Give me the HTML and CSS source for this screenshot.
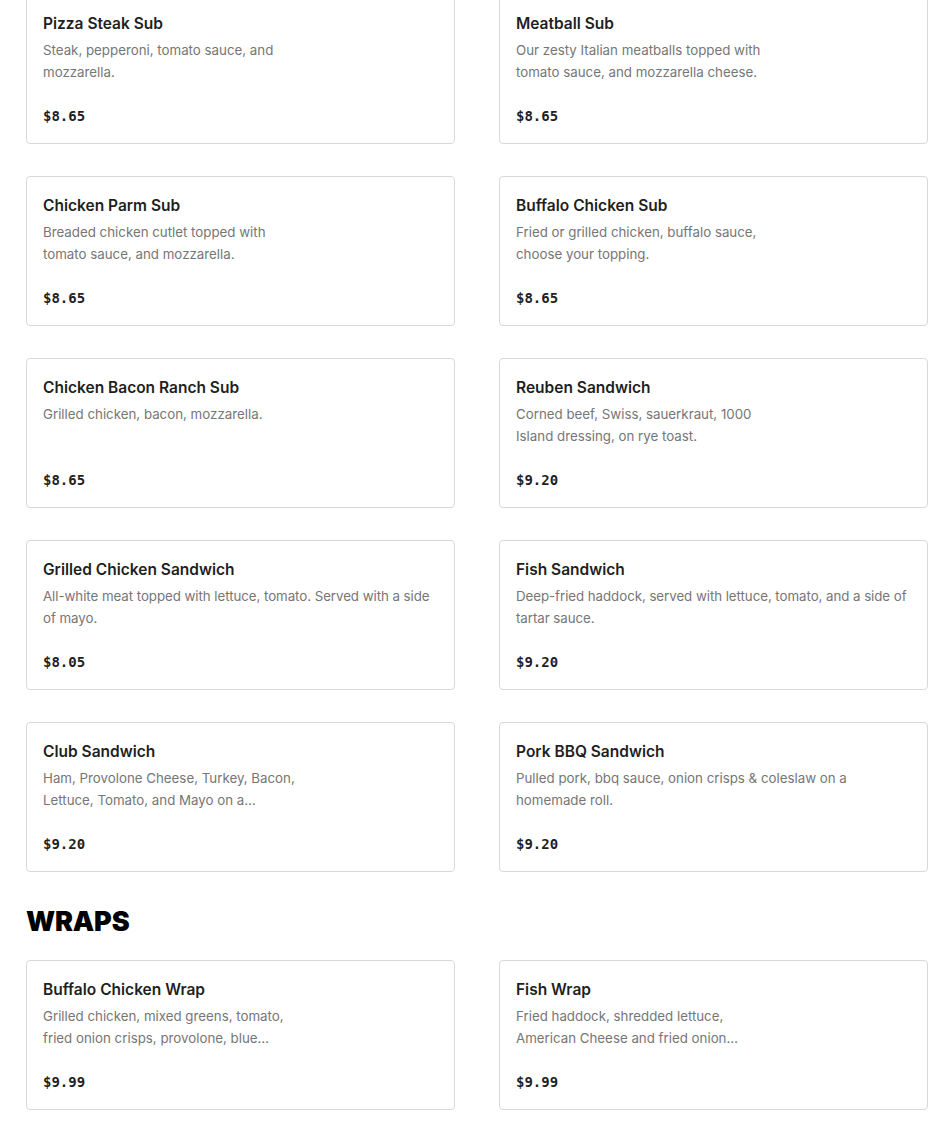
FILE: index.html
```html
<!DOCTYPE html>
<html lang="en">
<head>
<meta charset="utf-8">
<title>Menu</title>
<link rel="stylesheet" href="styles.css">
</head>
<body>
<main class="menu">
  <section class="section section-first">
    <div class="grid">
      <div class="card"><div class="card-body"><h3 class="title">Pizza Steak Sub</h3><p class="desc narrow">Steak, pepperoni, tomato sauce, and mozzarella.</p></div><div class="price">$8.65</div></div>
      <div class="card"><div class="card-body"><h3 class="title">Meatball Sub</h3><p class="desc narrow">Our zesty Italian meatballs topped with tomato sauce, and mozzarella cheese.</p></div><div class="price">$8.65</div></div>
      <div class="card"><div class="card-body"><h3 class="title">Chicken Parm Sub</h3><p class="desc narrow">Breaded chicken cutlet topped with tomato sauce, and mozzarella.</p></div><div class="price">$8.65</div></div>
      <div class="card"><div class="card-body"><h3 class="title">Buffalo Chicken Sub</h3><p class="desc narrow">Fried or grilled chicken, buffalo sauce, choose your topping.</p></div><div class="price">$8.65</div></div>
      <div class="card"><div class="card-body"><h3 class="title">Chicken Bacon Ranch Sub</h3><p class="desc narrow">Grilled chicken, bacon, mozzarella.</p></div><div class="price">$8.65</div></div>
      <div class="card"><div class="card-body"><h3 class="title">Reuben Sandwich</h3><p class="desc narrow">Corned beef, Swiss, sauerkraut, 1000 Island dressing, on rye toast.</p></div><div class="price">$9.20</div></div>
      <div class="card"><div class="card-body"><h3 class="title">Grilled Chicken Sandwich</h3><p class="desc full">All-white meat topped with lettuce, tomato. Served with a side of mayo.</p></div><div class="price">$8.05</div></div>
      <div class="card"><div class="card-body"><h3 class="title">Fish Sandwich</h3><p class="desc full">Deep-fried haddock, served with lettuce, tomato, and a side of tartar sauce.</p></div><div class="price">$9.20</div></div>
      <div class="card"><div class="card-body"><h3 class="title">Club Sandwich</h3><p class="desc narrow">Ham, Provolone Cheese, Turkey, Bacon, Lettuce, Tomato, and Mayo on a…</p></div><div class="price">$9.20</div></div>
      <div class="card"><div class="card-body"><h3 class="title">Pork BBQ Sandwich</h3><p class="desc medium">Pulled pork, bbq sauce, onion crisps &amp; coleslaw on a homemade roll.</p></div><div class="price">$9.20</div></div>
    </div>
  </section>
  <section class="section">
    <h2 class="section-title">WRAPS</h2>
    <div class="grid">
      <div class="card"><div class="card-body"><h3 class="title">Buffalo Chicken Wrap</h3><p class="desc narrow">Grilled chicken, mixed greens, tomato, fried onion crisps, provolone, blue…</p></div><div class="price">$9.99</div></div>
      <div class="card"><div class="card-body"><h3 class="title">Fish Wrap</h3><p class="desc narrow">Fried haddock, shredded lettuce, American Cheese and fried onion…</p></div><div class="price">$9.99</div></div>
    </div>
  </section>
</main>
</body>
</html>
```

FILE: styles.css
```css
* { box-sizing: border-box; }

html, body {
  margin: 0;
  padding: 0;
  background: #ffffff;
}

body {
  font-family: Inter, "Liberation Sans", Arial, sans-serif;
  color: #191919;
  overflow: hidden;
}

.menu {
  width: 902px;
  margin: -6px 0 0 26px;
}

.section-title {
  margin: 34px 0 22px;
  font-size: 27px;
  line-height: 32px;
  font-weight: 900;
  letter-spacing: -0.2px;
  color: #000000;
}

.grid {
  display: grid;
  grid-template-columns: 429px 429px;
  column-gap: 44px;
  row-gap: 32px;
}

.card {
  height: 150px;
  border: 1px solid #d8d8d8;
  border-radius: 4px;
  padding: 17px 16px 17px;
  display: flex;
  flex-direction: column;
  justify-content: space-between;
}

.title {
  margin: 0;
  font-size: 15.5px;
  line-height: 24px;
  font-weight: 600;
  color: #1f1f1f;
}

.desc {
  margin: 3px 0 0;
  font-size: 13.3px;
  line-height: 22px;
  color: #767676;
}

.desc.narrow { max-width: 262px; }
.desc.medium { max-width: 345px; }
.desc.full { letter-spacing: -0.05px; }

.price {
  font-family: "DejaVu Sans Mono", "Liberation Mono", monospace;
  font-weight: 700;
  font-size: 14px;
  line-height: 20px;
  color: #1f1f1f;
}
```
